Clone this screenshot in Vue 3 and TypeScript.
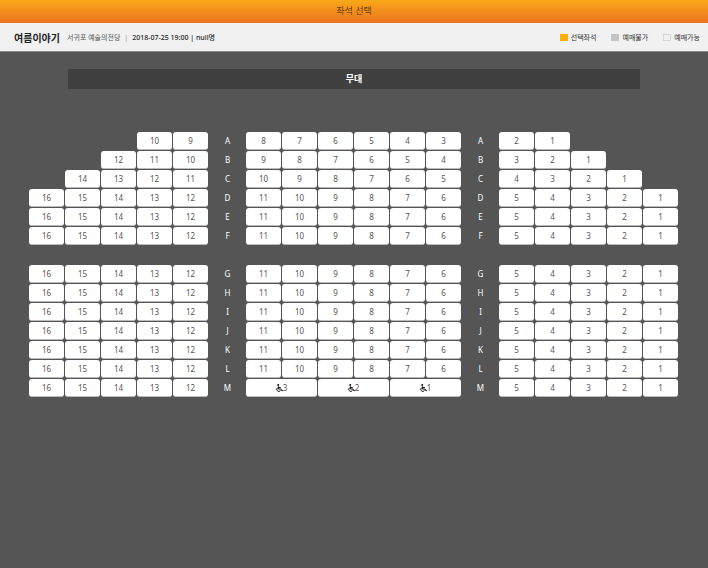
<script setup lang="ts">
interface Seat {
  label: string
  wheelchair?: boolean
}

interface SeatRow {
  name: string
  left: Seat[]
  center: Seat[]
  right: Seat[]
}

const range = (from: number, to: number): Seat[] =>
  Array.from({ length: from - to + 1 }, (_, i) => ({ label: String(from - i) }))

const fullRow = (name: string): SeatRow => ({
  name,
  left: range(16, 12),
  center: range(11, 6),
  right: range(5, 1),
})

const sections: SeatRow[][] = [
  [
    { name: 'A', left: range(10, 9), center: range(8, 3), right: range(2, 1) },
    { name: 'B', left: range(12, 10), center: range(9, 4), right: range(3, 1) },
    { name: 'C', left: range(14, 11), center: range(10, 5), right: range(4, 1) },
    ...['D', 'E', 'F'].map(fullRow),
  ],
  [
    ...['G', 'H', 'I', 'J', 'K', 'L'].map(fullRow),
    {
      ...fullRow('M'),
      center: range(3, 1).map((seat) => ({ ...seat, wheelchair: true })),
    },
  ],
]

const blocks = ['left', 'center', 'right'] as const
</script>

<template>
  <div class="page">
    <header class="titlebar"><h1>좌석 선택</h1></header>

    <section class="info">
      <div class="show">
        <h2>여름이야기</h2>
        <span class="venue">서귀포 예술의전당</span>
        <span class="divider">|</span>
        <span class="date">2018-07-25 19:00 | null명</span>
      </div>
      <ul class="legend">
        <li><i class="swatch selected"></i>선택좌석</li>
        <li><i class="swatch taken"></i>예매불가</li>
        <li><i class="swatch open"></i>예매가능</li>
      </ul>
    </section>

    <main>
      <div class="stage">무대</div>
      <div class="hall">
        <div v-for="(rows, s) in sections" :key="s" class="section">
          <div v-for="row in rows" :key="row.name" class="row">
            <template v-for="block in blocks" :key="block">
              <div class="block" :class="block">
                <button
                  v-for="seat in row[block]"
                  :key="seat.label"
                  type="button"
                  class="seat"
                  :class="{ wide: seat.wheelchair }"
                >
                  <svg v-if="seat.wheelchair" class="chair" viewBox="0 0 14 16" aria-hidden="true">
                    <circle cx="4.5" cy="2" r="2" />
                    <path d="M4.7 4.5V10H10L12 14L13.5 13.2M5 7H9.5" />
                    <path d="M3.2 7.5A4 4 0 1 0 9 12.8" />
                  </svg>{{ seat.label }}
                </button>
              </div>
              <span v-if="block !== 'right'" class="name">{{ row.name }}</span>
            </template>
          </div>
        </div>
      </div>
    </main>
  </div>
</template>

<style>
body {
  background: #555;
}
</style>

<style scoped>
.page {
  min-height: 100vh;
  background: #555;
  color: #333;
  font-family: "Noto Sans", "Noto Sans CJK KR", sans-serif;
  font-size: 8px;
}

.titlebar {
  height: 23px;
  background: linear-gradient(#f8a818, #ee7420);
  text-align: center;
}

h1,
h2 {
  margin: 0;
}

h1 {
  font-size: 9px;
  font-weight: 400;
  line-height: 22px;
  color: #6b3f14;
}

.info {
  display: flex;
  align-items: center;
  justify-content: space-between;
  height: 28px;
  padding: 0 8px 0 14px;
  background: #f1f1f1;
  border-bottom: 1px solid #888;
  font-size: 7px;
}

.show,
.legend,
.legend li {
  display: flex;
  align-items: center;
  white-space: nowrap;
}

h2 {
  margin-right: 7px;
  font-size: 10px;
  font-weight: 700;
  color: #222;
}

.venue {
  color: #555;
}

.divider {
  margin: 0 4px;
  color: #999;
}

.date {
  font-weight: 500;
  color: #222;
}

.legend {
  gap: 15px;
  margin: 0;
  padding: 0;
  list-style: none;
}

.legend li {
  gap: 3px;
}

.swatch {
  box-sizing: border-box;
  width: 8px;
  height: 7px;
}

.selected {
  background: #fbb010;
}

.taken {
  background: #c4c4c4;
}

.open {
  border: 1px solid #d5d5d5;
}

main {
  padding: 17px 29px;
}

.stage {
  margin: 0 39px 43px;
  background: #404040;
  color: #fff;
  font-size: 9px;
  font-weight: 700;
  line-height: 20px;
  text-align: center;
}

.hall {
  display: grid;
  gap: 20px;
}

.section {
  display: grid;
  gap: 1px;
}

.row {
  display: grid;
  grid-template-columns: 5fr 37px 6fr 37px 5fr;
}

.block {
  --seat: calc(100% / 5);
  display: flex;
}

.left {
  justify-content: flex-end;
}

.center {
  --seat: calc(100% / 6);
}

.seat {
  display: flex;
  flex: 0 0 calc(var(--seat) - 1px);
  align-items: center;
  justify-content: center;
  height: 18px;
  margin: 0 1px 0 0;
  padding: 0;
  border: 0;
  border-bottom: 1px solid #bbb;
  border-radius: 3px;
  background: #fff;
  color: #555;
  font: inherit;
  line-height: 17px;
}

.wide {
  flex-basis: calc(var(--seat) * 2 - 1px);
}

.chair {
  width: 7px;
  height: 8px;
  fill: none;
  stroke: #111;
  stroke-width: 2;
}

.chair circle {
  fill: #111;
  stroke: none;
}

.name {
  color: #fff;
  line-height: 17px;
  text-align: center;
}
</style>
